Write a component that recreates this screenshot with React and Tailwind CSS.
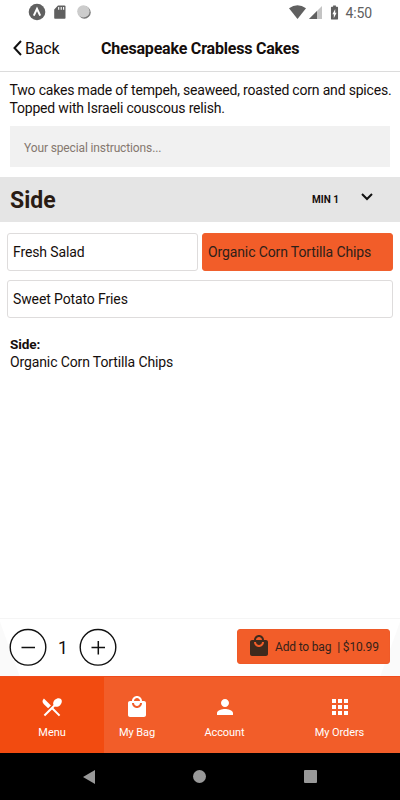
import { MdRestaurantMenu, MdLocalMall, MdPerson, MdApps, MdBatteryChargingFull } from "react-icons/md";

function StatusBar() {
  return (
    <div className="flex h-6 items-center pl-7 pr-[28px] text-[#606060]">
      <svg className="mr-[7px] h-[18px] w-[18px]" viewBox="0 0 18 18">
        <circle cx="9" cy="9" r="8.3" fill="#606060" />
        <path d="M5.8 12.7 9 5.8l3.2 6.9" fill="none" stroke="#fff" strokeWidth="2" />
      </svg>
      <svg className="h-[14px] w-[14px]" viewBox="0 0 14 14">
        <path d="M5 .5h6.5a1 1 0 0 1 1 1V13a.8.8 0 0 1-.8.8H2A.8.8 0 0 1 1.2 13V4.5Z" fill="#606060" />
        <path d="M5.7 2v2.8M8.2 2v2.8M10.6 2v2.8" stroke="#fff" strokeWidth="1.1" />
      </svg>
      <svg className="ml-[9px] h-4 w-4" viewBox="0 0 16 16">
        <circle cx="8.4" cy="8.4" r="6.3" fill="#777" />
        <circle cx="7.4" cy="7.4" r="6.2" fill="#ccc" />
      </svg>
      <svg className="ml-auto h-[14px] w-[17px]" viewBox="0 0 17 14">
        <path d="M0 3.3Q8.5-3 17 3.3L8.5 14Z" fill="#606060" />
      </svg>
      <svg className="ml-[3px] h-[13px] w-[13px]" viewBox="0 0 13 13">
        <path d="M13 0V13H0Z" fill="#c4c4c4" />
        <path d="M8 5V13H0Z" fill="#606060" />
      </svg>
      <MdBatteryChargingFull className="ml-[4px] h-[17px] w-[17px]" />
      <span className="ml-[3px] pt-px text-[14px] leading-none tracking-[-0.15px]">4:50</span>
    </div>
  );
}

function Choice({ label, selected, className }) {
  return (
    <button
      className={`flex h-[38px] items-center rounded-[3px] border pl-[5px] pt-px text-[14px] tracking-[-0.12px] ${
        selected ? "border-[#f0602d] bg-[#f25d29] text-[#2d2019]" : "border-[#dedcdc] bg-white text-[#150e0c]"
      } ${className}`}
    >
      {label}
    </button>
  );
}

function RoundButton({ plus }) {
  return (
    <button className="flex h-[38px] w-[38px] items-center justify-center text-[#111]">
      <svg className="h-[38px] w-[38px]" viewBox="0 0 38 38" fill="none" stroke="currentColor">
        <circle cx="19" cy="19.3" r="17.8" strokeWidth="1.4" />
        <path d={plus ? "M12.5 19.5h13.5M19.3 13v13.5" : "M12.5 19.5h13.5"} strokeWidth="1.5" />
      </svg>
    </button>
  );
}

function Tab({ icon: Icon, label, className }) {
  return (
    <div className={`flex flex-col items-center pt-[18px] text-white ${className}`}>
      <Icon className="h-6 w-6" />
      <span className="mt-[6px] text-[11px] leading-4 tracking-[-0.08px]">{label}</span>
    </div>
  );
}

export default function App() {
  return (
    <div className="flex h-[800px] w-[400px] flex-col overflow-hidden bg-white font-[Roboto,sans-serif] whitespace-nowrap text-[#150e0c]">
      <StatusBar />
      <header className="flex h-12 items-center border-b border-[#dcdcdc] pl-[13px]">
        <svg className="h-4 w-[9px]" viewBox="0 0 9 16" fill="none" stroke="#111" strokeWidth="2">
          <path d="M8 1 1.5 8 8 15" />
        </svg>
        <span className="ml-[3px] w-[76px] pt-[2px] text-[16px] tracking-[-0.2px]">Back</span>
        <h1 className="pt-[2px] text-[16px] font-bold tracking-[-0.2px]">Chesapeake Crabless Cakes</h1>
      </header>

      <p className="mt-[10px] pl-[9.5px] text-[14px] leading-[17.5px] tracking-[-0.19px]">
        Two cakes made of tempeh, seaweed, roasted corn and spices.
        <br />
        Topped with Israeli couscous relish.
      </p>
      <div className="mx-[10px] mt-[9px] flex h-[41px] items-center bg-[#f1f1f1] pl-[14px] pt-[2px] text-[12px] tracking-[-0.13px] text-[#85786f]">
        Your special instructions...
      </div>

      <section className="mt-[10px] flex h-[44.5px] items-center bg-[#e5e5e5] pl-[10px] pr-[27px]">
        <h2 className="mt-[4px] text-[23px] font-bold text-[#2a1c14]">Side</h2>
        <span className="ml-auto text-[10px] font-bold">MIN 1</span>
        <svg className="mb-[4px] ml-[22px] h-[8px] w-[12px]" viewBox="0 0 12 8" fill="none" stroke="#111" strokeWidth="2">
          <path d="m1 1 5 5 5-5" />
        </svg>
      </section>

      <div className="mt-[11.5px] flex flex-wrap gap-x-1 gap-y-[9px] pl-[7px]">
        <Choice label="Fresh Salad" className="w-[191px]" />
        <Choice label="Organic Corn Tortilla Chips" selected className="w-[191px]" />
        <Choice label="Sweet Potato Fries" className="w-[386px]" />
      </div>

      <div className="mt-[17px] pl-[10px] text-[14px] leading-[18px]">
        <p className="text-[13.6px] font-bold tracking-[-0.1px]">Side:</p>
        <p className="tracking-[-0.12px]">Organic Corn Tortilla Chips</p>
      </div>

      <div className="mt-auto flex h-[58px] items-start border-t border-[#f5f5f5] bg-[linear-gradient(70deg,#fafafa_18px,transparent_19px),linear-gradient(290deg,#fafafa_18px,transparent_19px)] pl-[9px] pr-[10px] pt-[9px]">
        <RoundButton />
        <span className="w-8 pt-[9px] text-center text-[17.5px] leading-[22px]">1</span>
        <RoundButton plus />
        <button className="ml-auto mt-[1px] flex h-[35px] w-[153px] items-center rounded-[3px] border border-[#ef5a28] bg-[#f25d29] pl-[9px] text-[12px] text-[#352219]">
          <MdLocalMall className="mb-px h-6 w-6 text-[#3f2a1d]" />
          <span className="ml-[4px] tracking-[-0.17px]">Add to bag</span>
          <span className="ml-[6px] tracking-[-0.17px]">| $10.99</span>
        </button>
      </div>

      <nav className="flex h-[77px] border-t border-[#f04b1c] bg-[#f25d29]">
        <Tab icon={MdRestaurantMenu} label="Menu" className="w-[104px] bg-[#f24b10]" />
        <Tab icon={MdLocalMall} label="My Bag" className="w-[66px]" />
        <Tab icon={MdPerson} label="Account" className="w-[109px]" />
        <Tab icon={MdApps} label="My Orders" className="w-[121px]" />
      </nav>
      <div className="flex h-[47px] items-center bg-black pl-[83px]">
        <svg className="h-[14px] w-3" viewBox="0 0 12 14" fill="#999">
          <path d="M12 0v14L0 7Z" />
        </svg>
        <span className="ml-[98px] h-[13px] w-[13px] rounded-full bg-[#999]" />
        <span className="ml-[98px] h-[13px] w-[13px] rounded-[1px] bg-[#999]" />
      </div>
    </div>
  );
}
